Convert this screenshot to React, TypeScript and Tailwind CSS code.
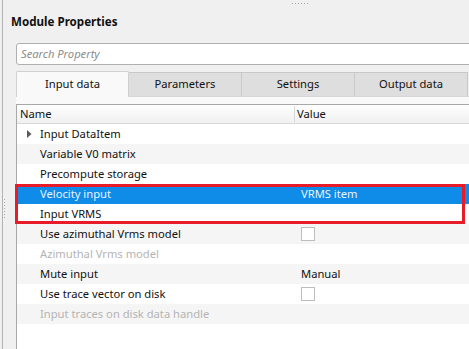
import React from 'react';

type Row = {
  name: string;
  value?: string;
  check?: boolean;
  expand?: boolean;
  disabled?: boolean;
};

const rows: Row[] = [
  { name: 'Input DataItem', expand: true },
  { name: 'Variable V0 matrix' },
  { name: 'Precompute storage' },
  { name: 'Velocity input', value: 'VRMS item' },
  { name: 'Input VRMS' },
  { name: 'Use azimuthal Vrms model', check: true },
  { name: 'Azimuthal Vrms model', disabled: true },
  { name: 'Mute input', value: 'Manual' },
  { name: 'Use trace vector on disk', check: true },
  { name: 'Input traces on disk data handle', disabled: true },
];

const tabs = ['Input data', 'Parameters', 'Settings', 'Output data'];

function PropRow({ row, index }: { row: Row; index: number }) {
  const selected = index === 3;
  const bg = selected ? 'bg-[#0f8be8]' : index % 2 === 1 ? 'bg-[#f5f5f5]' : 'bg-white';
  const text = selected ? 'text-[#eaf4fd]' : row.disabled ? 'text-[#b4b4b4]' : 'text-[#111]';
  return (
    <div className={`flex h-[20px] items-center ${bg} ${text}`}>
      <div className="flex w-[278px] items-center">
        <div className="flex w-[23px] justify-center pl-[2px]">
          {row.expand && (
            <svg width="5" height="8" viewBox="0 0 5 8">
              <path d="M0 0 L4.5 4 L0 8 Z" fill="#5a5a5a" />
            </svg>
          )}
        </div>
        <span className="whitespace-nowrap">{row.name}</span>
      </div>
      <div className="flex flex-1 items-center pl-[6px]">
        {row.value && <span>{row.value}</span>}
        {row.check && <div className="h-[14px] w-[14px] border border-[#bdbdbd] bg-white" />}
      </div>
    </div>
  );
}

export default function App() {
  return (
    <div
      className="relative flex h-[349px] w-[469px] overflow-hidden bg-[#f0f0f0] text-[11.2px]"
      style={{ fontFamily: '"Noto Sans", "Liberation Sans", sans-serif' }}
    >
      {/* grip dots */}
      <div className="absolute left-[292px] top-[3px] flex gap-[2px]">
        {[0, 1, 2, 3, 4, 5].map((i) => (
          <div key={i} className="h-px w-px bg-[#a8a8a8]" />
        ))}
      </div>
      <div className="absolute left-[4px] top-[199px] flex flex-col gap-[2px]">
        {[0, 1, 2, 3, 4, 5, 6].map((i) => (
          <div key={i} className="h-px w-px bg-[#a8a8a8]" />
        ))}
      </div>

      <div className="w-[2px]" />
      <div className="w-px bg-[#b4b4b4]" />

      <div className="flex flex-1 flex-col">
        {/* title */}
        <div className="flex h-[43px] items-center pl-[8px] text-[11.6px] font-bold text-[#111]">
          Module Properties
        </div>

        {/* search */}
        <div className="-mr-[3px] ml-[13px] flex h-[22px] items-center rounded-l-[3px] border border-[#b0b0b0] bg-white pl-[4px] italic text-[#8c8c8c]">
          Search Property
        </div>

        {/* tabs */}
        <div className="ml-[13px] mt-[6px] flex h-[26px] items-end border-b border-[#d6d6d6]">
          {tabs.map((t, i) =>
            i === 0 ? (
              <div
                key={t}
                className="-mb-px flex h-[26px] w-[113px] items-center justify-center rounded-t-[2px] border border-b-0 border-[#d0d0d0] bg-[#f9f9f9] text-[#111]"
              >
                {t}
              </div>
            ) : (
              <div
                key={t}
                className="flex h-[24px] w-[113px] items-center justify-center border border-b-0 border-l-0 border-[#c8c8c8] bg-[#dedede] text-[#111]"
              >
                {t}
              </div>
            )
          )}
        </div>

        {/* pane */}
        <div className="ml-[13px] flex flex-1 flex-col bg-[#f9f9f9] pt-[7px]">
          <div className="flex flex-1 flex-col border-l border-t border-[#a8a8a8] bg-white">
            <div className="flex h-[19px] items-center border-b border-[#d8d8d8] bg-gradient-to-b from-white to-[#f0f0f0] text-[#111]">
              <div className="w-[278px] border-r border-[#d6d6d6] pl-[3px]">Name</div>
              <div className="pl-[2px]">Value</div>
            </div>
            {rows.slice(0, 3).map((r, i) => (
              <PropRow key={r.name} row={r} index={i} />
            ))}
            <div className="relative">
              {rows.slice(3, 5).map((r, i) => (
                <PropRow key={r.name} row={r} index={i + 3} />
              ))}
              <div className="absolute -left-[2px] bottom-0 right-[4px] top-0 border-[3px] border-[#e81c28]" />
            </div>
            {rows.slice(5).map((r, i) => (
              <PropRow key={r.name} row={r} index={i + 5} />
            ))}
          </div>
        </div>
      </div>
    </div>
  );
}
